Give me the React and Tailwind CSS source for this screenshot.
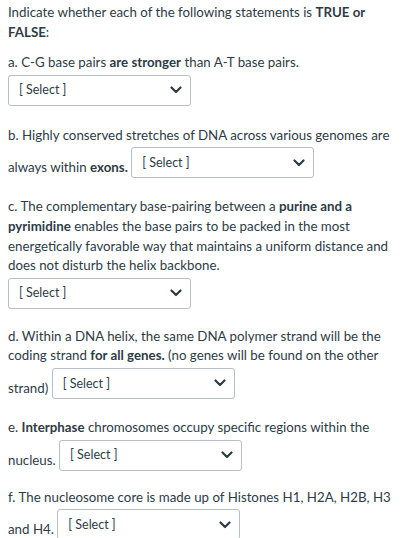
import React from "react";

function Select() {
    return (
        <span className="inline-flex items-center justify-between w-[183px] h-[31px] mt-[2px] border border-[#b8bec3] rounded-[3px] bg-white pl-[10px] pr-[6px] align-[5px] text-[12.5px] text-[#2d3b45]">
            <span>[ Select ]</span>
            <svg width="12" height="8" viewBox="0 0 12 8" className="mr-[2px]">
                <polyline points="1.5,1.5 6,6 10.5,1.5" fill="none" stroke="#2d3b45" strokeWidth="2.2" strokeLinecap="round" strokeLinejoin="round" />
            </svg>
        </span>
    );
}

export default function App() {
    return (
        <div className="bg-white w-[412px] h-[538px] overflow-hidden pl-[8px] pr-[12px] pt-[3px] text-[13.3px] leading-[19.6px] text-[#2d3b45]" style={{ fontFamily: "Lato, 'Open Sans', sans-serif" }}>
            <p className="mb-[11px]">
                Indicate whether each of the following statements is <b>TRUE or FALSE</b>:
            </p>
            <p className="mb-[20px]">
                a. C-G base pairs <b>are stronger</b> than A-T base pairs. <Select />
            </p>
            <p className="mb-[19px]">
                b. Highly conserved stretches of DNA across various genomes are always within <b>exons.</b> <Select />
            </p>
            <p className="mb-[18px]">
                c. The complementary base-pairing between a <b>purine and a pyrimidine</b> enables the base pairs to be packed in the most energetically favorable way that maintains a uniform distance and does not disturb the helix backbone. <Select />
            </p>
            <p className="mb-[19px]">
                d. Within a DNA helix, the same DNA polymer strand will be the coding strand <b>for all genes.</b> (no genes will be found on the other strand) <Select />
            </p>
            <p className="mb-[17px]">
                e. <b>Interphase</b> chromosomes occupy specific regions within the nucleus. <Select />
            </p>
            <p className="mb-[19px]">
                f. The nucleosome core is made up of Histones H1, H2A, H2B, H3 and H4. <Select />
            </p>
        </div>
    );
}
